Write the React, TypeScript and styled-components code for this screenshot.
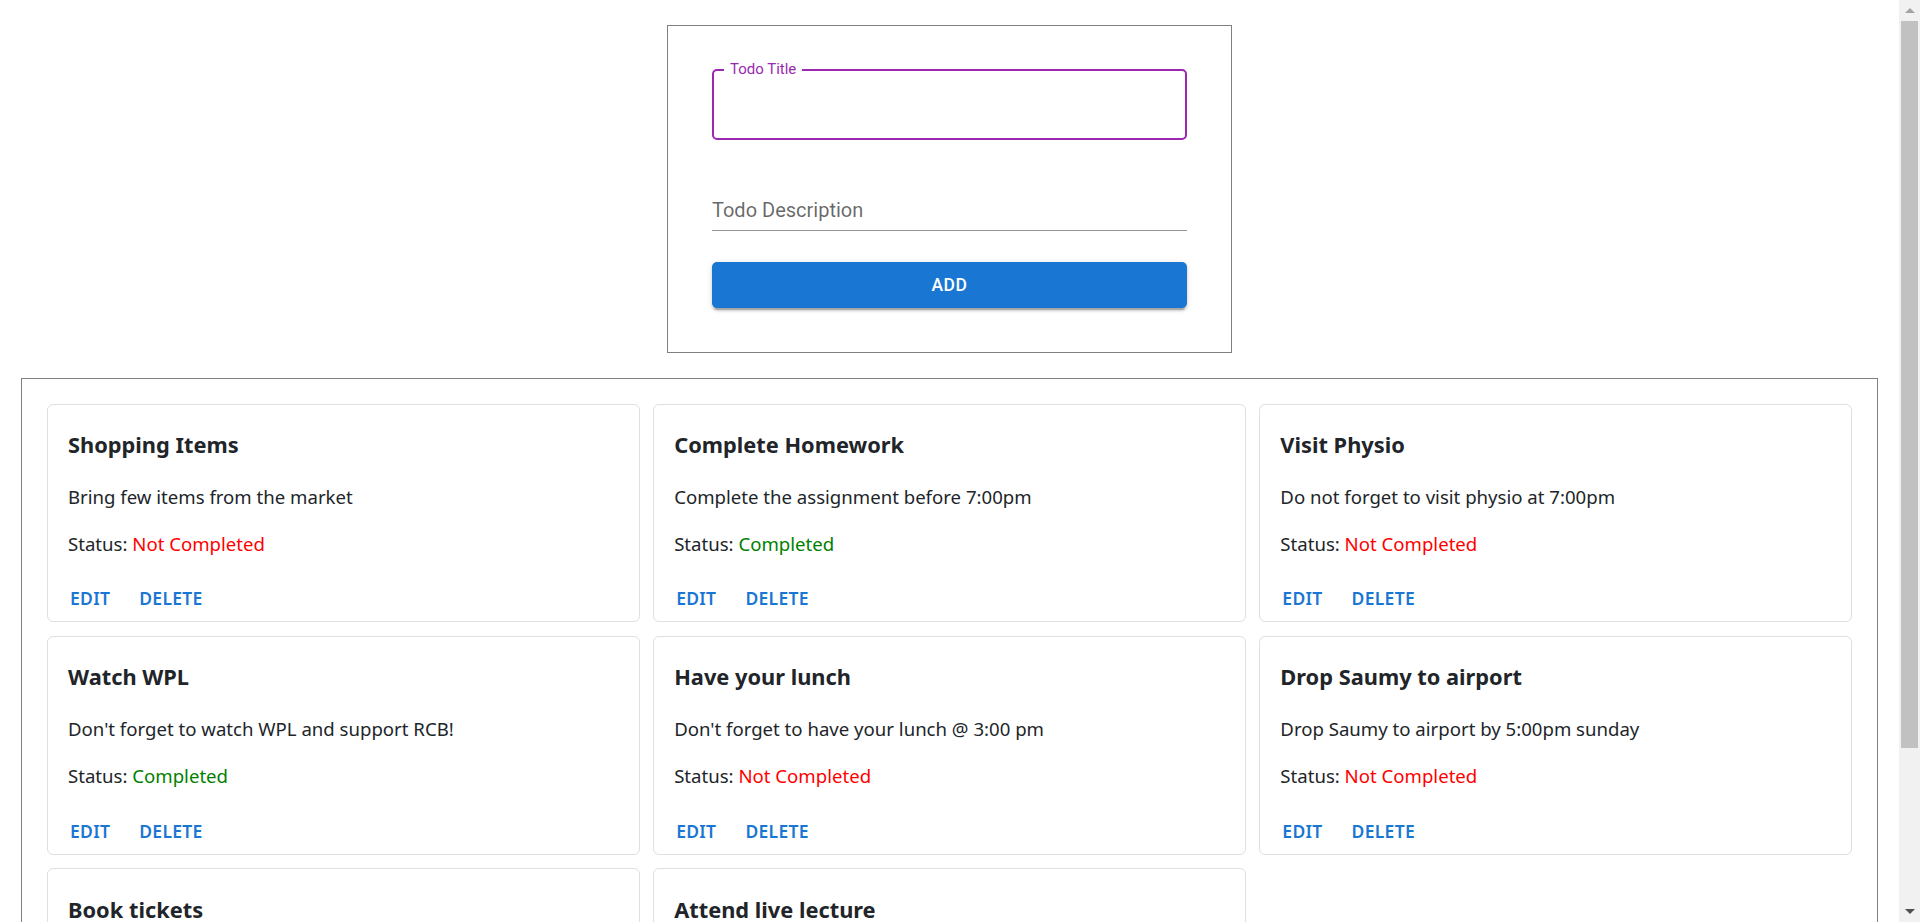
import { createGlobalStyle, styled } from 'styled-components'

interface Todo {
  id: number
  title: string
  description: string
  completed: boolean
}

const todos: Todo[] = [
  { id: 1, title: 'Shopping Items', description: 'Bring few items from the market', completed: false },
  { id: 2, title: 'Complete Homework', description: 'Complete the assignment before 7:00pm', completed: true },
  { id: 3, title: 'Visit Physio', description: 'Do not forget to visit physio at 7:00pm', completed: false },
  { id: 4, title: 'Watch WPL', description: "Don't forget to watch WPL and support RCB!", completed: true },
  { id: 5, title: 'Have your lunch', description: "Don't forget to have your lunch @ 3:00 pm", completed: false },
  { id: 6, title: 'Drop Saumy to airport', description: 'Drop Saumy to airport by 5:00pm sunday', completed: false },
  { id: 7, title: 'Book tickets', description: 'Book the train tickets for the weekend', completed: false },
  { id: 8, title: 'Attend live lecture', description: 'Attend the live lecture at 9:00pm', completed: true },
]

function App() {
  return (
    <>
      <GlobalStyle />
      <Page>
        <FormCard>
          <OutlinedField>
            <FieldLegend>Todo Title</FieldLegend>
            <TitleInput autoFocus />
          </OutlinedField>
          <UnderlineInput placeholder="Todo Description" />
          <AddButton type="button">Add</AddButton>
        </FormCard>

        <ListPanel>
          <CardGrid>
            {todos.map((todo) => (
              <TodoCard key={todo.id}>
                <CardTitle>{todo.title}</CardTitle>
                <CardText>{todo.description}</CardText>
                <CardText>
                  Status: <StatusValue $done={todo.completed}>{todo.completed ? 'Completed' : 'Not Completed'}</StatusValue>
                </CardText>
                <CardActions>
                  <ActionButton>Edit</ActionButton>
                  <ActionButton>Delete</ActionButton>
                </CardActions>
              </TodoCard>
            ))}
          </CardGrid>
        </ListPanel>
      </Page>

      {/* window scrollbar as seen in the screenshot */}
      <ScrollRail>
        <ScrollArrow $dir="up" />
        <ScrollThumb />
        <ScrollSpace />
        <ScrollArrow $dir="down" />
      </ScrollRail>
    </>
  )
}

const GlobalStyle = createGlobalStyle`
  html, body {
    margin: 0;
    background: #fff;
  }

  body {
    font-family: "Noto Sans", "Open Sans", sans-serif;
    color: #212529;
  }
`

const Page = styled.div`
  width: 1899px;
  padding: 25px 0 8px;
`

const FormCard = styled.form`
  display: flex;
  flex-direction: column;
  box-sizing: border-box;
  width: 565px;
  margin: 0 auto;
  padding: 36px 44px 44px;
  border: 1px solid #808080;
`

const OutlinedField = styled.fieldset`
  margin: 0;
  padding: 0 10px;
  min-inline-size: 0;
  border: 2px solid #9c27b0;
  border-radius: 5px;
`

const FieldLegend = styled.legend`
  padding: 0 6px;
  font-family: Roboto, sans-serif;
  font-size: 15px;
  line-height: 15px;
  color: #9c27b0;
`

const TitleInput = styled.input`
  display: block;
  width: 100%;
  height: 61px;
  padding: 0;
  border: none;
  outline: none;
  background: transparent;
  font-family: Roboto, sans-serif;
  font-size: 20px;
  caret-color: transparent;
`

const UnderlineInput = styled.input`
  margin-top: 50px;
  padding: 6px 0 5px;
  height: 29px;
  border: none;
  border-bottom: 1px solid #949494;
  outline: none;
  font-family: Roboto, sans-serif;
  font-size: 20px;
  line-height: 29px;
  color: rgba(0, 0, 0, 0.87);

  &::placeholder {
    color: rgba(0, 0, 0, 0.6);
    opacity: 1;
  }
`

const AddButton = styled.button`
  margin-top: 31px;
  height: 45.5px;
  border: none;
  border-radius: 5px;
  background-color: #1976d2;
  color: #fff;
  font-family: Roboto, sans-serif;
  font-weight: 500;
  font-size: 17.5px;
  letter-spacing: 0.5px;
  text-transform: uppercase;
  box-shadow:
    0 4px 1px -2px rgba(0, 0, 0, 0.2),
    0 2.5px 2.5px 0 rgba(0, 0, 0, 0.14),
    0 1px 6px 0 rgba(0, 0, 0, 0.12);
`

const ListPanel = styled.div`
  margin: 25px 21px 0;
  padding: 25px;
  border: 1px solid #808080;
`

const CardGrid = styled.div`
  display: grid;
  grid-template-columns: repeat(3, 1fr);
  gap: 13.5px;
`

const TodoCard = styled.div`
  display: flex;
  flex-direction: column;
  padding: 26.5px 20px 7px;
  border: 1px solid #dfdfdf;
  border-radius: 6px;
`

const CardTitle = styled.h5`
  margin: 0 0 22.8px;
  font-size: 21.8px;
  line-height: 28px;
  font-weight: 700;
`

const CardText = styled.p`
  margin: 0 0 17px;
  font-size: 18.6px;
  line-height: 30px;
`

const StatusValue = styled.span<{ $done: boolean }>`
  color: ${(p) => (p.$done ? '#008000' : '#ff0000')};
`

const CardActions = styled.div`
  display: flex;
  gap: 17px;
  margin: 6.7px 0 0 -4px;
`

const ActionButton = styled.button`
  padding: 5px 6px;
  border: none;
  background: none;
  color: #1976d2;
  font-family: "Noto Sans", sans-serif;
  font-weight: 600;
  font-size: 17.5px;
  line-height: 22px;
  letter-spacing: 0.3px;
  text-transform: uppercase;
`

const ScrollRail = styled.div`
  position: fixed;
  top: 0;
  right: 0;
  display: flex;
  flex-direction: column;
  width: 21px;
  height: 100vh;
  background: #f1f1f1;
`

const ScrollArrow = styled.div<{ $dir: 'up' | 'down' }>`
  display: flex;
  align-items: center;
  justify-content: center;
  height: 21px;
  flex-shrink: 0;

  &::before {
    content: '';
    border-left: 5px solid transparent;
    border-right: 5px solid transparent;
    ${(p) =>
      p.$dir === 'up' ? 'border-bottom: 5px solid #a3a3a3;' : 'border-top: 5px solid #505050;'}
  }
`

const ScrollThumb = styled.div`
  height: 727px;
  margin: 0 2px;
  background: #c1c1c1;
  flex-shrink: 0;
`

const ScrollSpace = styled.div`
  flex: 1;
`

export default App
